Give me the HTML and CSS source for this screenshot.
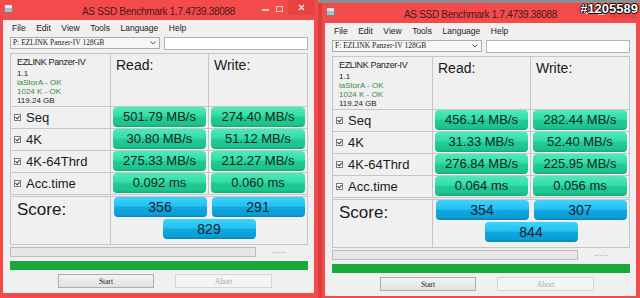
FILE: index.html
```html
<!DOCTYPE html>
<html lang="en">
<head>
    <meta charset="UTF-8">
    <title>AS SSD Benchmark</title>
    <link rel="stylesheet" href="styles.css">
</head>
<body>
    <div class="desktop">
        <div class="window">
            <div class="titlebar">
                <svg class="app-icon" width="9" height="9" viewBox="0 0 9 9"><rect x="0.5" y="3.5" width="8" height="5" fill="#b8b8b8" stroke="#808080"/><rect x="1" y="1" width="7" height="3" fill="#e6e6e6"/></svg>
                <span class="title">AS SSD Benchmark 1.7.4739.38088</span>
                <div class="controls"><span class="min"></span><span class="max"></span><span class="close"><svg width="7" height="7" viewBox="0 0 7 7"><path d="M1 1 L6 6 M6 1 L1 6" stroke="#fbe0e0" stroke-width="1.4"/></svg></span></div>
            </div>
            <div class="client">
                <nav class="menu"><span>File</span><span>Edit</span><span>View</span><span>Tools</span><span>Language</span><span>Help</span></nav>
                <div class="toolbar">
                    <div class="select">P: EZLINK Panzer-IV 128GB<svg class="arrow" width="6" height="4" viewBox="0 0 6 4"><path d="M0.5 0.5 L3 3 L5.5 0.5" fill="none" stroke="#555"/></svg></div>
                    <div class="textbox"></div>
                </div>
                <div class="results">
                    <div class="info">
                        <div class="model">EZLINK Panzer-IV</div>
                        <div>1.1</div>
                        <div class="ok">iaStorA - OK</div>
                        <div class="ok">1024 K - OK</div>
                        <div>119.24 GB</div>
                    </div>
                    <div class="head">Read:</div>
                    <div class="head">Write:</div>

                    <div class="label"><span class="check"></span>Seq</div>
                    <div class="cell"><div class="bar">501.79 MB/s</div></div>
                    <div class="cell"><div class="bar">274.40 MB/s</div></div>

                    <div class="label"><span class="check"></span>4K</div>
                    <div class="cell"><div class="bar">30.80 MB/s</div></div>
                    <div class="cell"><div class="bar">51.12 MB/s</div></div>

                    <div class="label"><span class="check"></span>4K-64Thrd</div>
                    <div class="cell"><div class="bar">275.33 MB/s</div></div>
                    <div class="cell"><div class="bar">212.27 MB/s</div></div>

                    <div class="label"><span class="check"></span>Acc.time</div>
                    <div class="cell"><div class="bar">0.092 ms</div></div>
                    <div class="cell"><div class="bar">0.060 ms</div></div>
                </div>
                <div class="score">
                    <div class="score-label">Score:</div>
                    <div class="score-bars">
                        <div class="sbar">356</div>
                        <div class="sbar">291</div>
                        <div class="sbar">829</div>
                    </div>
                </div>
                <div class="progress-row">
                    <div class="progress"></div>
                    <span class="timer">--:--:--</span>
                </div>
                <div class="done"></div>
                <div class="buttons">
                    <button class="btn">Start</button>
                    <button class="btn" disabled>Abort</button>
                </div>
            </div>
        </div>

        <div class="window second">
            <div class="titlebar">
                <svg class="app-icon" width="9" height="9" viewBox="0 0 9 9"><rect x="0.5" y="3.5" width="8" height="5" fill="#b8b8b8" stroke="#808080"/><rect x="1" y="1" width="7" height="3" fill="#e6e6e6"/></svg>
                <span class="title">AS SSD Benchmark 1.7.4739.38088</span>
                <div class="controls"><span class="min"></span><span class="max"></span><span class="close"><svg width="7" height="7" viewBox="0 0 7 7"><path d="M1 1 L6 6 M6 1 L1 6" stroke="#fbe0e0" stroke-width="1.4"/></svg></span></div>
            </div>
            <div class="client">
                <nav class="menu"><span>File</span><span>Edit</span><span>View</span><span>Tools</span><span>Language</span><span>Help</span></nav>
                <div class="toolbar">
                    <div class="select">F: EZLINK Panzer-IV 128GB<svg class="arrow" width="6" height="4" viewBox="0 0 6 4"><path d="M0.5 0.5 L3 3 L5.5 0.5" fill="none" stroke="#555"/></svg></div>
                    <div class="textbox"></div>
                </div>
                <div class="results">
                    <div class="info">
                        <div class="model">EZLINK Panzer-IV</div>
                        <div>1.1</div>
                        <div class="ok">iaStorA - OK</div>
                        <div class="ok">1024 K - OK</div>
                        <div>119.24 GB</div>
                    </div>
                    <div class="head">Read:</div>
                    <div class="head">Write:</div>

                    <div class="label"><span class="check"></span>Seq</div>
                    <div class="cell"><div class="bar">456.14 MB/s</div></div>
                    <div class="cell"><div class="bar">282.44 MB/s</div></div>

                    <div class="label"><span class="check"></span>4K</div>
                    <div class="cell"><div class="bar">31.33 MB/s</div></div>
                    <div class="cell"><div class="bar">52.40 MB/s</div></div>

                    <div class="label"><span class="check"></span>4K-64Thrd</div>
                    <div class="cell"><div class="bar">276.84 MB/s</div></div>
                    <div class="cell"><div class="bar">225.95 MB/s</div></div>

                    <div class="label"><span class="check"></span>Acc.time</div>
                    <div class="cell"><div class="bar">0.064 ms</div></div>
                    <div class="cell"><div class="bar">0.056 ms</div></div>
                </div>
                <div class="score">
                    <div class="score-label">Score:</div>
                    <div class="score-bars">
                        <div class="sbar">354</div>
                        <div class="sbar">307</div>
                        <div class="sbar">844</div>
                    </div>
                </div>
                <div class="progress-row">
                    <div class="progress"></div>
                    <span class="timer">--:--:--</span>
                </div>
                <div class="done"></div>
                <div class="buttons">
                    <button class="btn">Start</button>
                    <button class="btn" disabled>Abort</button>
                </div>
            </div>
        </div>
    </div>
    <div class="watermark">#1205589</div>
</body>
</html>
```

FILE: styles.css
```css
body {
    margin: 0;
    width: 640px;
    height: 298px;
    overflow: hidden;
    position: relative;
    background: linear-gradient(#8e8e8e 0 3px, #d84040 3px);
    font-family: "Liberation Sans", Arial, sans-serif;
    color: #1a1a1a;
}
.desktop {
    display: flex;
    gap: 4px;
    align-items: flex-start;
}
.window {
    flex: none;
    width: 318px;
    box-sizing: border-box;
    padding: 0 4px 5px 3px;
    background: #f34b4b;
}
.window.second {
    margin-top: 3px;
}
.titlebar {
    height: 20px;
    display: grid;
    grid-template-columns: 60px 1fr 60px;
    align-items: start;
}
.app-icon {
    margin: 4px 0 0 1px;
}
.title {
    text-align: center;
    font-size: 10px;
    letter-spacing: -0.3px;
    line-height: 20px;
    padding-top: 2px;
    color: #4a1818;
    white-space: nowrap;
}
.controls {
    display: flex;
    justify-content: flex-end;
    align-items: flex-start;
    margin-right: -1px;
}
.min {
    width: 7px;
    height: 2px;
    margin: 9px 7px 0 0;
    background: #f8c8c8;
}
.max {
    width: 5px;
    height: 4px;
    margin: 6px 5px 0 0;
    border: 1px solid #f8c8c8;
}
.close {
    width: 27px;
    height: 15px;
    background: #e64242;
    display: flex;
    align-items: center;
    justify-content: center;
}
.client {
    height: 273px;
    box-sizing: border-box;
    padding: 0 6px 0 7px;
    background: #f0f0f0;
}
.menu {
    height: 16px;
    display: flex;
    align-items: center;
    gap: 10.5px;
    padding-left: 2px;
    font-size: 8.5px;
    color: #222;
}
.toolbar {
    display: flex;
    gap: 4px;
    margin-top: 1px;
}
.select {
    width: 150px;
    height: 12px;
    box-sizing: border-box;
    border: 1px solid #acacac;
    background: #f6f6f6;
    font-family: "Liberation Serif", "Times New Roman", serif;
    font-size: 7.5px;
    line-height: 10px;
    padding-left: 2px;
    display: flex;
    align-items: center;
    justify-content: space-between;
    padding-right: 3px;
}
.arrow {
    flex: none;
}
.textbox {
    width: 144px;
    height: 13px;
    box-sizing: border-box;
    border: 1px solid #b4b4b4;
    background: #fff;
}
.results {
    margin-top: 3px;
    display: grid;
    grid-template-columns: 99px 97px 98px;
    grid-template-rows: 52px repeat(4, 21px);
    gap: 1px;
    padding: 1px;
    background: #c6c6c6;
}
.results > div {
    background: #f0f0f0;
}
.info {
    padding: 2px 0 0 6px;
    font-size: 8px;
    line-height: 9px;
    color: #222;
}
.info .model {
    font-size: 9px;
    letter-spacing: -0.35px;
    line-height: 13px;
}
.info .ok {
    color: #3a8a3a;
}
.head {
    padding: 3px 0 0 5px;
    font-size: 14px;
    line-height: 16px;
    color: #1a1a1a;
}
.label {
    display: flex;
    align-items: center;
    gap: 5px;
    padding-left: 3px;
    font-size: 13px;
    color: #1a1a1a;
}
.check {
    width: 5px;
    height: 5px;
    border: 1px solid #7a7a7a;
    background: #fff;
    position: relative;
}
.check::after {
    content: "";
    position: absolute;
    left: 1px;
    top: 0;
    width: 2px;
    height: 3px;
    border: solid #333;
    border-width: 0 1px 1px 0;
    transform: rotate(40deg);
}
.cell {
    padding: 0 2px;
}
.bar {
    height: 20px;
    border-radius: 4px;
    background: linear-gradient(#4fe9bb 0%, #33dda8 45%, #22cc95 52%, #1dc28b 88%, #13a676 100%);
    text-align: center;
    font-size: 13px;
    line-height: 20px;
    color: #13261e;
}
.score {
    margin-top: 1px;
    display: grid;
    grid-template-columns: 99px 196px;
    gap: 1px;
    padding: 1px;
    background: #c6c6c6;
}
.score > div {
    background: #f0f0f0;
}
.score-label {
    padding: 4px 0 0 6px;
    font-size: 17px;
    line-height: 18px;
}
.score-bars {
    height: 47px;
    display: flex;
    flex-wrap: wrap;
    justify-content: center;
    align-content: flex-start;
    gap: 2px 5px;
}
.sbar {
    width: 93px;
    height: 20px;
    border-radius: 4px;
    background: linear-gradient(#3fd2fb 0%, #22c2f2 45%, #10a7df 52%, #0c9dd5 88%, #0782b4 100%);
    text-align: center;
    font-size: 14px;
    line-height: 21px;
    color: #14222e;
}
.progress-row {
    margin-top: 2px;
    display: flex;
    align-items: center;
}
.progress {
    width: 246px;
    height: 10px;
    box-sizing: border-box;
    border: 1px solid #bcbcbc;
    background: #e6e6e6;
}
.timer {
    margin-left: 16px;
    font-size: 6px;
    color: #8a8a8a;
    letter-spacing: -0.2px;
}
.done {
    margin-top: 4px;
    height: 9px;
    background: #19aa39;
}
.buttons {
    display: flex;
    gap: 21px;
    margin: 4px 0 0 48px;
}
.btn {
    width: 96px;
    height: 14px;
    padding: 0;
    border: 1px solid #adadad;
    background: linear-gradient(#f3f3f3, #e2e2e2);
    font-family: "Liberation Serif", "Times New Roman", serif;
    font-size: 7.5px;
    color: #222;
}
.btn:disabled {
    width: 97px;
    border-color: #d6d6d6;
    background: #f4f4f4;
    color: #a8a8a8;
}
.watermark {
    position: absolute;
    top: 1px;
    right: 2px;
    font-size: 13px;
    font-weight: bold;
    color: #fff;
    text-shadow: 1px 0 0 #000, -1px 0 0 #000, 0 1px 0 #000, 0 -1px 0 #000;
}
```
